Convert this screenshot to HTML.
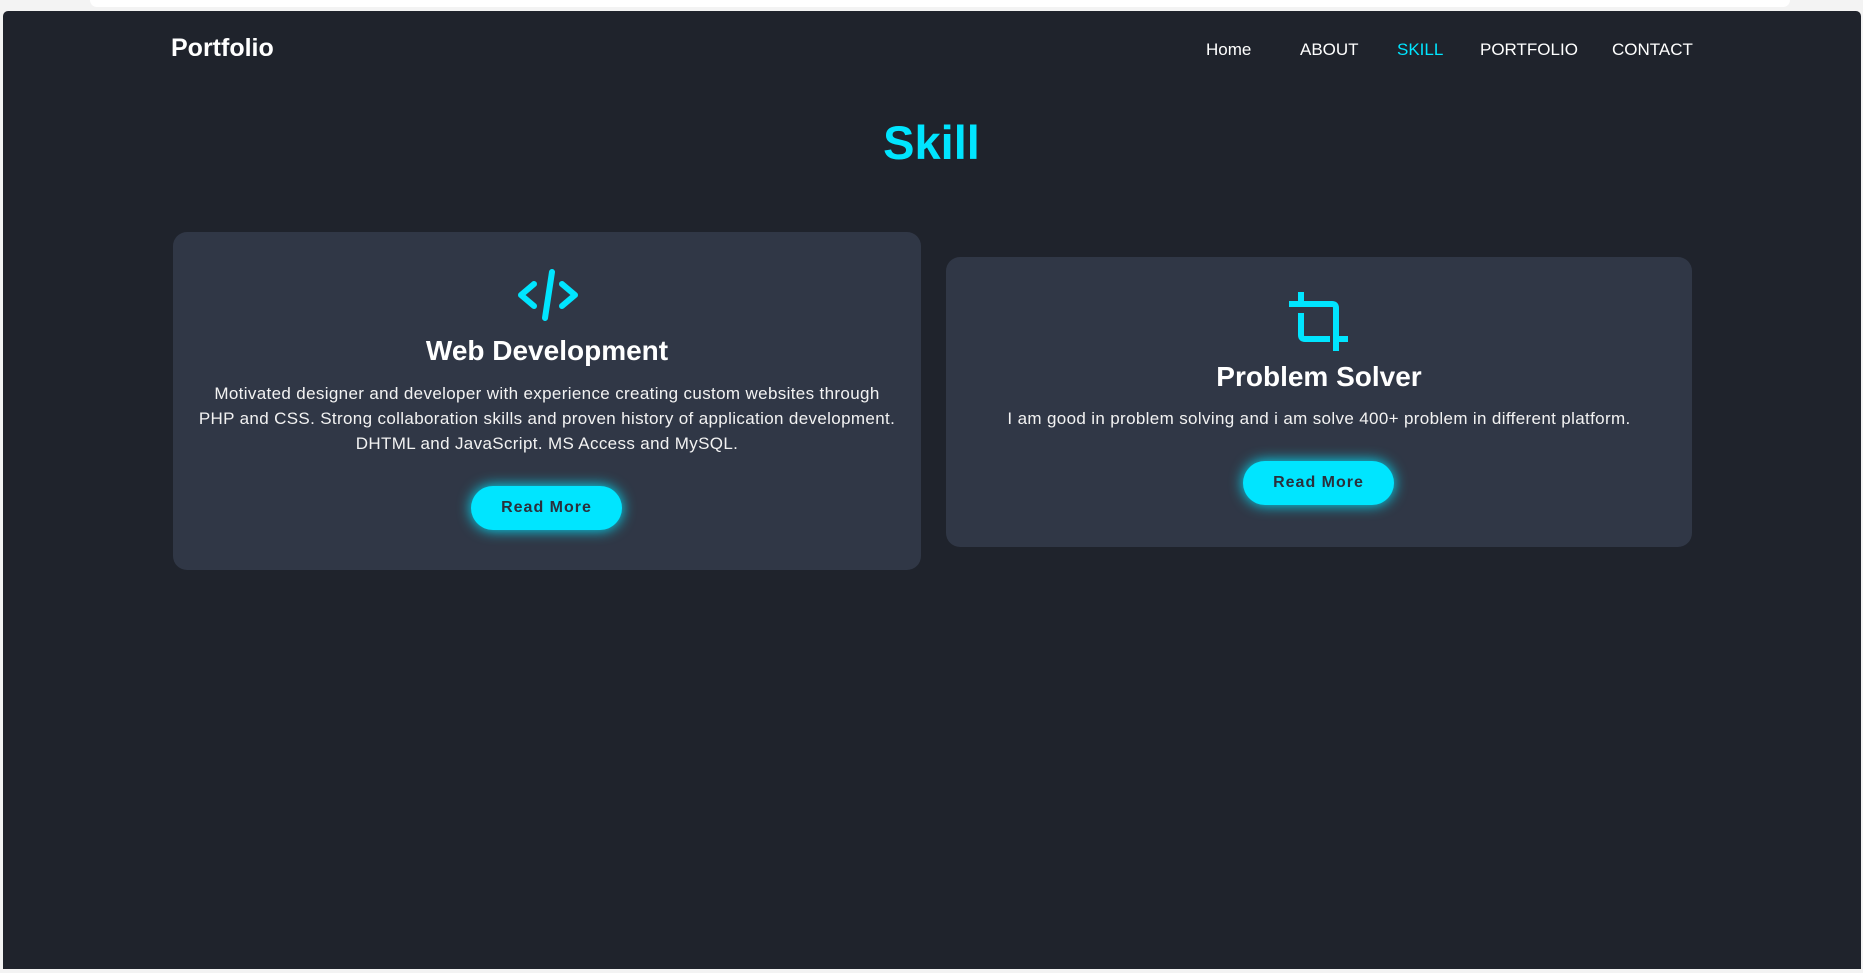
<!DOCTYPE html>
<html><head><meta charset="utf-8"><style>
*{margin:0;padding:0;box-sizing:border-box}
html,body{width:1863px;height:973px;background:#f3f3f3;overflow:hidden;font-family:"Liberation Sans",sans-serif}
.topbar{position:absolute;left:90px;top:0;width:1700px;height:7px;background:#fff;border-radius:0 0 10px 10px}
.page{position:absolute;left:3px;top:11px;width:1858px;height:958px;background:#1f232c;border-radius:5px 5px 0 0}
.logo{position:absolute;left:171px;top:34px;color:#fff;font-weight:bold;font-size:25px}
.nav a{position:absolute;top:40px;color:#fff;font-size:17px;text-decoration:none}
h1{position:absolute;left:0;width:1863px;top:115px;text-align:center;color:#00e5ff;font-size:47px;font-weight:bold}
.card{position:absolute;background:#303746;border-radius:14px;text-align:center;color:#fff}
.card h2{position:absolute;left:0;right:0;font-size:28px;font-weight:bold}
.card p{position:absolute;left:0;right:0;font-size:17px;letter-spacing:0.35px;line-height:25px;color:#f2f2f2}
.btn{position:absolute;width:151px;height:44px;border-radius:22px;background:#00e5ff;color:#2a303c;font-weight:bold;font-size:16px;letter-spacing:1px;line-height:44px;box-shadow:0 0 14px #00e5ff}
</style></head><body>
<div class="topbar"></div>
<div class="page"></div>
<div class="logo">Portfolio</div>
<div class="nav">
<a style="left:1206px">Home</a>
<a style="left:1300px">ABOUT</a>
<a style="left:1397px;color:#00e5ff">SKILL</a>
<a style="left:1480px">PORTFOLIO</a>
<a style="left:1612px">CONTACT</a>
</div>
<h1>Skill</h1>
<div class="card" style="left:173px;top:232px;width:748px;height:338px">
<svg style="position:absolute;left:343px;top:36px" width="64" height="56" viewBox="0 0 64 56"><g fill="none" stroke="#00e5ff" stroke-width="6" stroke-linecap="round" stroke-linejoin="round"><path d="M18 16L5 27L18 38"/><path d="M46 16L59 27L46 38"/><path d="M36 4L29 50"/></g></svg>
<h2 style="top:103px">Web Development</h2>
<p style="top:149px">Motivated designer and developer with experience creating custom websites through<br>PHP and CSS. Strong collaboration skills and proven history of application development.<br>DHTML and JavaScript. MS Access and MySQL.</p>
<div class="btn" style="left:298px;top:254px">Read More</div>
</div>
<div class="card" style="left:946px;top:257px;width:746px;height:290px">
<svg style="position:absolute;left:342px;top:34px" width="64" height="64" viewBox="0 0 64 64"><g fill="none" stroke="#00e5ff" stroke-width="6"><path d="M13 1V10"/><path d="M1 13H44Q48 13 48 17V60"/><path d="M13 22V44Q13 48 17 48H42"/><path d="M51 48H60"/></g></svg>
<h2 style="top:104px">Problem Solver</h2>
<p style="top:149px">I am good in problem solving and i am solve 400+ problem in different platform.</p>
<div class="btn" style="left:297px;top:204px">Read More</div>
</div>
</body></html>
